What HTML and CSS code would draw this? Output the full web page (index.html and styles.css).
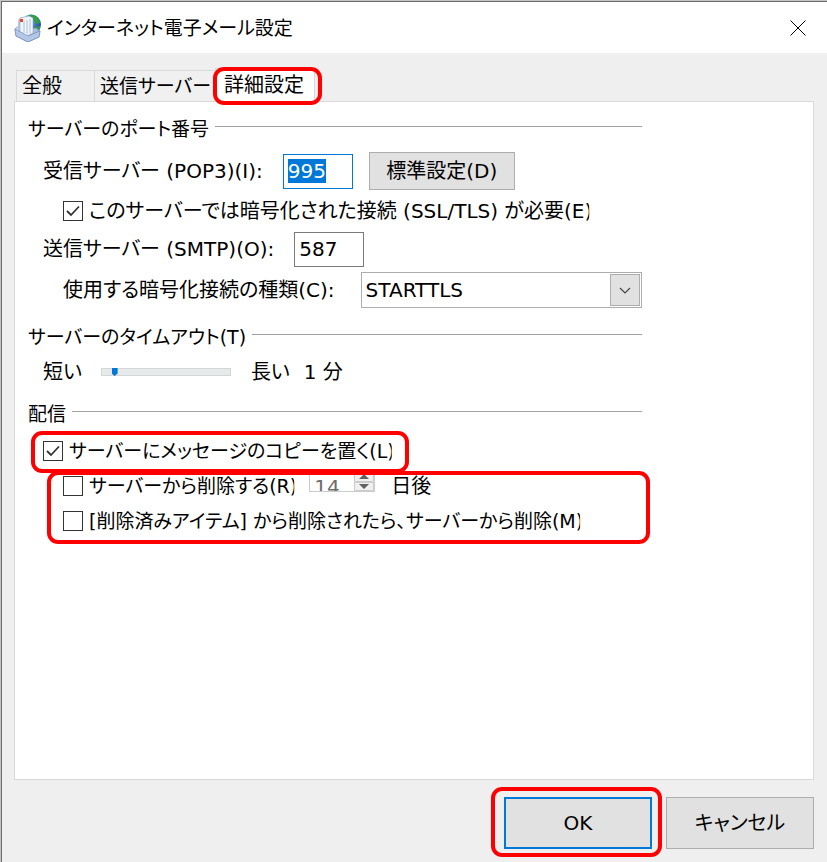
FILE: index.html
```html
<!DOCTYPE html>
<html lang="ja">
<head>
  <meta charset="UTF-8">
  <meta name="viewport" content="width=device-width, initial-scale=1.0">
  <title>インターネット電子メール設定</title>
  <link rel="stylesheet" href="styles.css">
</head>
<body>
  <div class="window">
    <header class="titlebar">
      <svg class="app-icon" viewBox="0 0 28 28" aria-hidden="true">
        <defs>
          <linearGradient id="tray" x1="0" y1="0" x2="1" y2="1">
            <stop offset="0" stop-color="#dfe9f7"/>
            <stop offset="1" stop-color="#7f9cc9"/>
          </linearGradient>
          <radialGradient id="globe" cx="0.3" cy="0.3" r="0.8">
            <stop offset="0" stop-color="#8cc4f2"/>
            <stop offset="1" stop-color="#123f9c"/>
          </radialGradient>
        </defs>
        <circle cx="17" cy="10.500" r="10" fill="url(#globe)"/>
        <path d="M15 1c4-1 8 1 10 4l1 4-4 1-2-3-2-3-4-1zM21 13l5-1c0 4-1 6-4 8l-2-3z" fill="#2f9e44"/>
        <path d="M1 15l4-3 8 3 9-1 4 3-1 6-11 5-12-6z" fill="url(#tray)" stroke="#6d86b3" stroke-width=".7"/>
        <path d="M4 6l3-3 3 1v15l-4 1-2-3z" fill="#b9c8e2"/>
        <path d="M6 4l9-2 4 2v15l-6 3-7-4z" fill="#f1f5fc" stroke="#8da2c8" stroke-width=".6"/>
        <path d="M10 7v12M13 6v14M16 5v14" stroke="#9db0d2" stroke-width=".8"/>
        <path d="M1 15l13 7 12-5-1 6-11 5-12-6z" fill="#b4c7e6" stroke="#6d86b3" stroke-width=".6"/>
        <rect x="6" y="5" width="3" height="3" fill="#f0441f"/>
      </svg>
      <h1 class="title">インターネット電子メール設定</h1>
      <button class="close" type="button" aria-label="閉じる">
        <svg viewBox="0 0 16 16" aria-hidden="true"><path d="M.5.5l15 15M15.500.5l-15 15"/></svg>
      </button>
    </header>

    <form class="dialog">
      <div class="tabs" role="tablist">
        <button class="tab tab-general" type="button" role="tab" aria-selected="false">全般</button>
        <button class="tab tab-outgoing" type="button" role="tab" aria-selected="false">送信サーバー</button>
        <button class="tab tab-advanced marked" type="button" role="tab" aria-selected="true">詳細設定</button>
      </div>

      <div class="panel" role="tabpanel">
        <fieldset class="section">
          <legend class="heading">サーバーのポート番号</legend>
          <div class="row indent-1 row-button">
            <label for="pop">受信サーバー (POP3)(I):</label>
            <input class="port" id="pop" type="text" value="995">
            <button class="btn btn-default" type="button">標準設定(D)</button>
          </div>
          <div class="row indent-2 row-check">
            <input class="check" type="checkbox" id="ssl" checked>
            <label class="cut" for="ssl">このサーバーでは暗号化された接続 (SSL/TLS) が必要(E)</label>
          </div>
          <div class="row indent-1">
            <label for="smtp">送信サーバー (SMTP)(O):</label>
            <input class="port" id="smtp" type="text" value="587">
          </div>
          <div class="row indent-2">
            <label for="crypt">使用する暗号化接続の種類(C):</label>
            <div class="combo">
              <select id="crypt">
                <option>STARTTLS</option>
              </select>
              <span class="combo-arrow"><svg viewBox="0 0 12 7" aria-hidden="true"><path d="M1 1l5 5 5-5"/></svg></span>
            </div>
          </div>
        </fieldset>

        <fieldset class="section">
          <legend class="heading"><label for="timeout">サーバーのタイムアウト(T)</label></legend>
          <div class="row indent-1 row-slider">
            <span>短い</span>
            <input class="slider" type="range" id="timeout" min="0" max="100" value="8">
            <span>長い</span>
            <output for="timeout">1 分</output>
          </div>
        </fieldset>

        <fieldset class="section">
          <legend class="heading">配信</legend>
          <div class="row indent-1 row-check marked marked-copy">
            <input class="check" type="checkbox" id="copy" checked>
            <label class="cut small" for="copy">サーバーにメッセージのコピーを置く(L)</label>
          </div>
          <div class="remove marked">
            <div class="row row-check">
              <input class="check" type="checkbox" id="expire">
              <label class="cut small" for="expire">サーバーから削除する(R)</label>
              <div class="spin">
                <input type="text" id="days" value="14" aria-label="日数" disabled>
                <svg class="spin-arrows" viewBox="0 0 20 18" aria-hidden="true">
                  <path class="spin-face" d="M.5.5h19v8h-19zM.5 9.500h19v8h-19z"/>
                  <path class="spin-mark" d="M5 6l5-5 5 5zM5 11h10l-5 5z"/>
                </svg>
              </div>
              <label for="days">日後</label>
            </div>
            <div class="row row-check">
              <input class="check" type="checkbox" id="purge">
              <label class="cut small" for="purge">[削除済みアイテム] から削除されたら、サーバーから削除(M)</label>
            </div>
          </div>
        </fieldset>
      </div>

      <footer class="actions">
        <span class="marked marked-ok"><button class="btn btn-action btn-primary" type="submit">OK</button></span>
        <button class="btn btn-action" type="button">キャンセル</button>
      </footer>
    </form>
  </div>

  <script>
    const pop = document.getElementById("pop");
    pop.focus();
    pop.select();
  </script>
</body>
</html>
```

FILE: styles.css
```css
* {
  box-sizing: border-box;
}
body {
  margin: 0;
  padding: 1px 0 0 1px;
  min-height: 100vh;
  display: flex;
  background: #c4c4c4;
  color: #000;
  font-family: "DejaVu Sans", "Noto Sans CJK JP", sans-serif;
  font-size: 20px;
  line-height: 28px;
  font-feature-settings: "palt";
}
button, input, select {
  font: inherit;
  font-feature-settings: inherit;
  color: inherit;
  margin: 0;
  border-radius: 0;
  outline: none;
}
.window {
  flex: 1;
  display: flex;
  flex-direction: column;
  border-left: 1px solid #6b6b6b;
  border-top: 1px solid #6b6b6b;
  background: #efefef;
}

/* title bar */
.titlebar {
  display: flex;
  align-items: center;
  height: 51px;
  padding: 0 21px 0 12px;
  background: #fff;
}
.app-icon {
  width: 28px;
  height: 28px;
}
.title {
  flex: 1;
  margin: 0 0 0 5px;
  font-size: 19px;
  font-weight: normal;
}
.close {
  display: flex;
  padding: 0;
  border: 0;
  background: none;
}
.close svg {
  width: 16px;
  height: 16px;
  stroke: #000;
  stroke-width: 1;
}

.dialog {
  flex: 1;
  display: flex;
  flex-direction: column;
  padding: 15px 13px 13px 12px;
}

/* tabs */
.tabs {
  display: flex;
  align-items: flex-end;
  padding-left: 2px;
}
.tab {
  height: 31px;
  padding: 0 0 0 5px;
  border: 1px solid #d9d9d9;
  border-bottom: 0;
  background: #f0f0f0;
  text-align: left;
  white-space: nowrap;
}
.tab-general {
  width: 78px;
  border-right: 0;
}
.tab-outgoing {
  width: 121px;
  border-right: 0;
  font-size: 19px;
}
.tab-advanced {
  width: 100px;
  height: 34px;
  padding: 0 0 2px 8px;
  margin-bottom: -1px;
  background: #fff;
}

.panel {
  flex: 1;
  padding: 11px 13px;
  border: 1px solid #d9d9d9;
  background: #fff;
}
.section {
  display: flex;
  flex-direction: column;
  gap: 7px;
  max-width: 614px;
  min-width: 0;
  margin: 0 0 14px;
  padding: 0;
  border: 0;
}
.heading {
  display: flex;
  align-items: center;
  gap: 6px;
  width: 100%;
  height: 32px;
  margin-bottom: 7px;
  padding: 0;
  font-size: 19px;
}
.heading::after {
  content: "";
  flex: 1;
  height: 1px;
  margin-bottom: 5px;
  background: #a0a0a0;
}
.row {
  display: flex;
  align-items: center;
  height: 34px;
  white-space: nowrap;
}
.row-button {
  height: 38px;
}
.row-check {
  height: 28px;
  gap: 6px;
}
.row-slider {
  height: 24px;
}
.indent-1 {
  margin-left: 15px;
}
.indent-2 {
  margin-left: 35px;
}
.small {
  font-size: 19px;
}
.cut {
  clip-path: inset(0 3px 0 0);
}

/* controls */
.port {
  width: 70px;
  height: 35px;
  margin-left: 20px;
  padding: 0 4px;
  border: 1px solid #7a7a7a;
  background: #fff;
}
.port:focus {
  border-color: #0078d7;
}
.port::selection {
  background: #0078d7;
  color: #fff;
}
.btn {
  border: 1px solid #adadad;
  background: #e1e1e1;
  text-align: center;
}
.btn-default {
  width: 146px;
  height: 38px;
  margin-left: 16px;
  padding: 0;
}
.check {
  appearance: none;
  flex: none;
  width: 20px;
  height: 20px;
  border: 1px solid #333;
  background: #fff;
}
.check:checked {
  background: #fff url("data:image/svg+xml,%3Csvg xmlns='http://www.w3.org/2000/svg' viewBox='0 0 18 18'%3E%3Cpath d='M3 9l4 4 8-8.500' fill='none' stroke='%23333' stroke-width='1.800'/%3E%3C/svg%3E") center / 18px no-repeat;
}
.combo {
  flex: 1;
  position: relative;
  height: 36px;
  margin-left: 26px;
}
.combo select {
  appearance: none;
  width: 100%;
  height: 36px;
  padding: 0 36px 0 4px;
  border: 1px solid #adadad;
  background: #fff;
}
.combo-arrow {
  position: absolute;
  top: 2px;
  right: 2px;
  bottom: 2px;
  width: 30px;
  display: flex;
  align-items: center;
  justify-content: center;
  border: 1px solid #adadad;
  background: #e1e1e1;
  pointer-events: none;
}
.combo-arrow svg {
  width: 12px;
  height: 7px;
  fill: none;
  stroke: #444;
  stroke-width: 1.2;
}
.slider {
  appearance: none;
  width: 130px;
  height: 8px;
  margin: 0 20px 0 19px;
  border: 1px solid #d6d6d6;
  background: #e7eaea;
}
.slider::-webkit-slider-thumb {
  appearance: none;
  width: 6px;
  height: 8px;
  background: #0078d7;
  clip-path: polygon(0 0, 100% 0, 100% 70%, 50% 100%, 0 70%);
}
.row-slider output {
  margin-left: 14px;
}
.spin {
  position: relative;
  align-self: flex-start;
  width: 66px;
  height: 20px;
  margin: 0 10px 0 6px;
  overflow: hidden;
  border: 1px solid #ccc;
}
.spin input {
  display: block;
  width: 44px;
  height: 28px;
  padding: 0 4px;
  border: 0;
  background: #fff;
  color: #6d6d6d;
}
.spin-arrows {
  position: absolute;
  top: 0;
  right: 0;
  width: 20px;
  height: 18px;
}
.spin-face {
  fill: #f0f0f0;
  stroke: #ccc;
}
.spin-mark {
  fill: #606060;
}
.remove {
  display: flex;
  flex-direction: column;
  gap: 7px;
  margin-left: 35px;
}

/* footer */
.actions {
  display: flex;
  justify-content: flex-end;
  gap: 14px;
  padding-top: 17px;
}
.btn-action {
  width: 148px;
  height: 52px;
}
.btn-primary {
  border: 2px solid #0078d7;
}

/* red rings round the settings to change */
.marked {
  position: relative;
}
.marked::after {
  content: "";
  position: absolute;
  inset: -2px -8px -3px -3px;
  border: 4px solid #f00;
  border-radius: 11px;
  pointer-events: none;
}
.marked-copy::after {
  inset: -6px 233px -8px -12px;
}
.remove::after {
  inset: -1px -8px -9px -16px;
}
.marked-ok::after {
  inset: -10px -10px -8px -13px;
}
```
